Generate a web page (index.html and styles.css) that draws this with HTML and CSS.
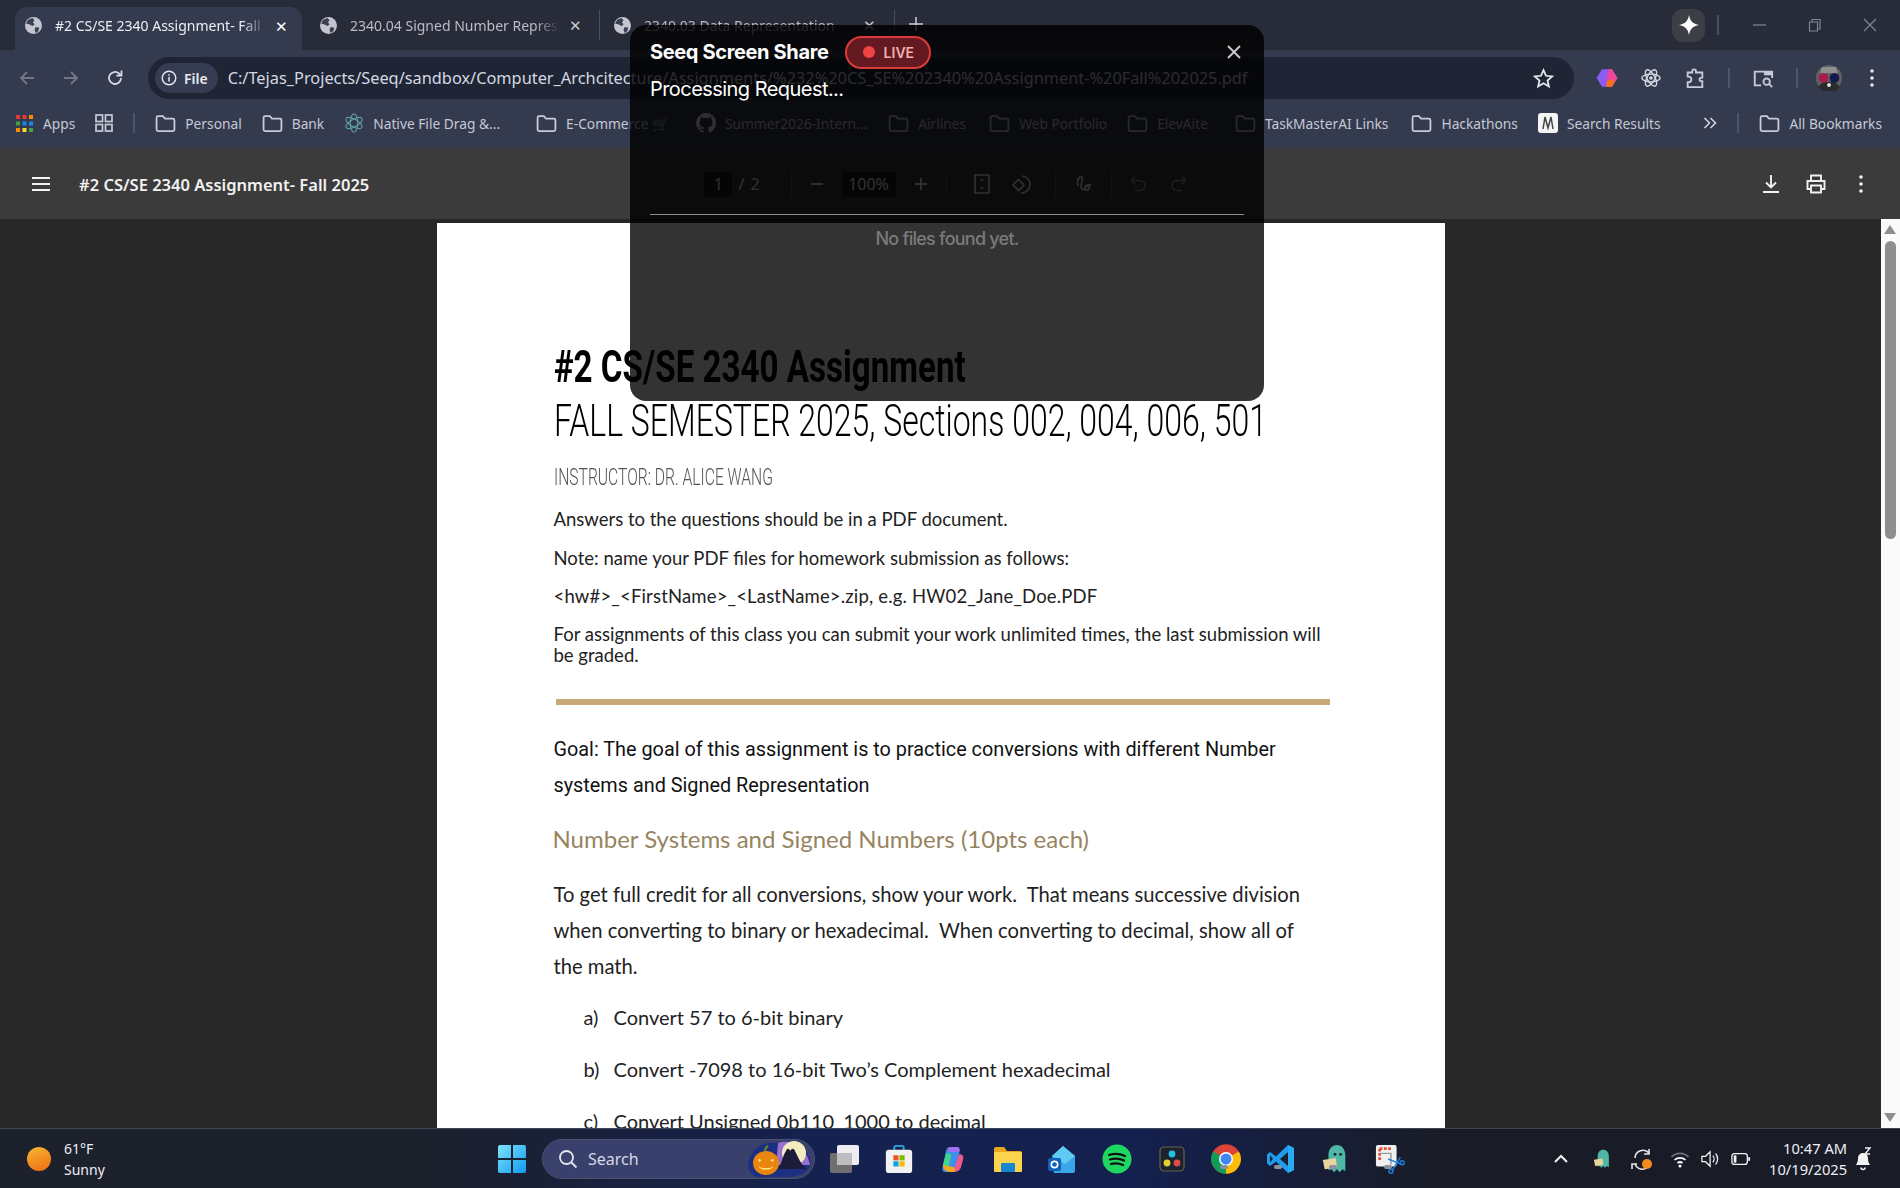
FILE: index.html
```html
<!DOCTYPE html>
<html lang="en">
<head>
<meta charset="utf-8">
<title>#2 CS/SE 2340 Assignment- Fall 2025</title>
<link rel="stylesheet" href="styles.css">
</head>
<body>
<svg class="defs" width="0" height="0">
  <symbol id="globe" viewBox="0 0 16 16"><circle cx="8" cy="8" r="8" fill="#c3c6d0"/><path d="M3 2.500 7 1l2 2-1.500 2L9 7l-2 1.500L4.500 7 1 6zM10 9.500l3.500.5-1 3.500L10 15l-1-3z" fill="#3a3f52"/></symbol>
  <symbol id="folder" viewBox="0 0 20 18"><path d="M1.500 3.500a1.500 1.500 0 0 1 1.500-1.500h4.500l2 2.300h7.500a1.500 1.500 0 0 1 1.500 1.500v9a1.500 1.500 0 0 1-1.500 1.500H3a1.500 1.500 0 0 1-1.500-1.500z" fill="none" stroke="currentColor" stroke-width="1.700"/></symbol>
</svg>
<div class="screen">
  <header class="tabstrip">
    <div class="tab tab-active">
      <svg class="fav"><use href="#globe"/></svg>
      <span class="tab-title tab-title-bright">#2 CS/SE 2340 Assignment- Fall 2025</span>
      <span class="tab-x tab-x-bright">✕</span>
    </div>
    <div class="tab tab-second">
      <svg class="fav"><use href="#globe"/></svg>
      <span class="tab-title">2340.04 Signed Number Representation</span>
      <span class="tab-x">✕</span>
    </div>
    <div class="tab tab-third">
      <svg class="fav"><use href="#globe"/></svg>
      <span class="tab-title">2340.03 Data Representation</span>
      <span class="tab-x">✕</span>
    </div>
    <svg class="tab-plus" viewBox="0 0 14 14"><path d="M7 0v14M0 7h14" stroke="#c9ccd8" stroke-width="1.500"/></svg>
    <div class="win-controls">
      <span class="gem"><svg width="22" height="22" viewBox="0 0 22 22"><path d="M11 1c1 6 4 9 10 10-6 1-9 4-10 10-1-6-4-9-10-10 6-1 9-4 10-10z" fill="#fff"/></svg></span>
      <i class="vsep"></i>
      <svg class="win-btn win-btn-first" viewBox="0 0 14 14"><path d="M0 7h13" stroke="#80869a" stroke-width="1.200"/></svg>
      <svg class="win-btn" viewBox="0 0 14 14"><path d="M1.500 4h8v9h-8zM4 4V1.500h8V11H9.500" fill="none" stroke="#80869a" stroke-width="1.200"/></svg>
      <svg class="win-btn" viewBox="0 0 14 14"><path d="M1 1l12 12M13 1 1 13" stroke="#80869a" stroke-width="1.200"/></svg>
    </div>
  </header>

  <nav class="toolbar">
    <svg class="nav-ico nav-dim" viewBox="0 0 20 20"><path d="M17 10H4M10 4l-6 6 6 6" fill="none" stroke="currentColor" stroke-width="1.800"/></svg>
    <svg class="nav-ico nav-dim" viewBox="0 0 20 20"><path d="M3 10h13M10 4l6 6-6 6" fill="none" stroke="currentColor" stroke-width="1.800"/></svg>
    <svg class="nav-ico" viewBox="0 0 20 20"><path d="M16 10a6 6 0 1 1-2-4.500L16 7.500M16.500 2.500v5.200h-5.200" fill="none" stroke="currentColor" stroke-width="1.800"/></svg>
    <div class="omnibox">
      <span class="chip"><svg width="16" height="16" viewBox="0 0 16 16"><circle cx="8" cy="8" r="6.800" fill="none" stroke="currentColor" stroke-width="1.400"/><path d="M8 7v4.500M8 4.200v1.500" stroke="currentColor" stroke-width="1.500"/></svg>File</span>
      <span class="url">C:/Tejas_Projects/Seeq/sandbox/Computer_Archcitecture/Assignments/%232%20CS_SE%202340%20Assignment-%20Fall%202025.pdf</span>
      <svg class="star" viewBox="0 0 20 20"><path d="m10 2 2.400 5.400 5.800.6-4.400 3.900 1.300 5.700-5.100-3-5.100 3 1.300-5.700L1.800 8l5.800-.6z" fill="none" stroke="#e8eaf0" stroke-width="1.700"/></svg>
    </div>
    <div class="ext-row">
      <svg class="ext" viewBox="0 0 20 20"><path d="M5.500 2h9l5 8-5 8h-9l-5-8z" fill="#8b5cf6"/><path d="M11 2h3.500l5 8-5 8H9z" fill="#ec4899"/><path d="M9 18l1.500-6h7l-3 6z" fill="#f97316"/></svg>
      <svg class="ext" viewBox="0 0 24 24"><g fill="none" stroke="#d5d8e2" stroke-width="1.500"><ellipse cx="12" cy="12" rx="10" ry="4.200"/><ellipse cx="12" cy="12" rx="10" ry="4.200" transform="rotate(60 12 12)"/><ellipse cx="12" cy="12" rx="10" ry="4.200" transform="rotate(120 12 12)"/></g><circle cx="12" cy="12" r="2" fill="#d5d8e2"/></svg>
      <svg class="ext" viewBox="0 0 24 24"><path d="M4 6h5V4.500a2 2 0 0 1 4 0V6h7v5.500h-1a2 2 0 0 0 0 4h1V22H4v-5.500h1a3 3 0 0 0 0-6H4z" fill="none" stroke="#c9ccd8" stroke-width="2"/></svg>
      <i class="vsep-sm"></i>
      <svg class="ext" viewBox="0 0 24 24"><path d="M10 20H3V5h19v7" fill="none" stroke="#c9ccd8" stroke-width="2"/><path d="M13 5h9v4h-9z" fill="#c9ccd8"/><circle cx="16" cy="16" r="3.500" fill="none" stroke="#c9ccd8" stroke-width="2"/><path d="m18.500 18.500 3.500 3.500" stroke="#c9ccd8" stroke-width="2"/></svg>
      <i class="vsep-sm"></i>
      <svg class="avatar" viewBox="0 0 26 26"><circle cx="13" cy="13" r="13" fill="#5e6062"/><path d="M2 22 7 17h12l5 5-5 4H7z" fill="#2b2b2b"/><path d="M6 2h14l2 6H4z" fill="#8f8f8f"/><circle cx="7.500" cy="13" r="4.800" fill="#a81a50"/><circle cx="18.500" cy="13" r="4.800" fill="#141a50"/><circle cx="13" cy="20" r="2" fill="#ddd"/></svg>
      <svg class="dots" viewBox="0 0 4 18"><circle cx="2" cy="2" r="1.800"/><circle cx="2" cy="9" r="1.800"/><circle cx="2" cy="16" r="1.800"/></svg>
    </div>
  </nav>

  <nav class="bookmarks">
    <div class="bm bm-apps">
      <svg class="apps-ico" viewBox="0 0 17 17">
        <rect width="4" height="4" fill="#e53935"/><rect x="6.500" width="4" height="4" fill="#e53935"/><rect x="13" width="4" height="4" fill="#fb8c00"/>
        <rect y="6.500" width="4" height="4" fill="#43a047"/><rect x="6.500" y="6.500" width="4" height="4" fill="#1e88e5"/><rect x="13" y="6.500" width="4" height="4" fill="#1e88e5"/>
        <rect y="13" width="4" height="4" fill="#fb8c00"/><rect x="6.500" y="13" width="4" height="4" fill="#fdd835"/><rect x="13" y="13" width="4" height="4" fill="#43a047"/>
      </svg>
      <span>Apps</span>
    </div>
    <svg class="tabs-ico" viewBox="0 0 18 18"><g fill="none" stroke="#c9ccd8" stroke-width="1.700"><rect x="1" y="1" width="6.500" height="6.500"/><rect x="10.500" y="1" width="6.500" height="6.500"/><rect x="1" y="10.500" width="6.500" height="6.500"/><rect x="10.500" y="10.500" width="6.500" height="6.500"/></g></svg>
    <i class="vsep-bm"></i>
    <div class="bm"><svg class="folder"><use href="#folder"/></svg><span>Personal</span></div>
    <div class="bm"><svg class="folder"><use href="#folder"/></svg><span>Bank</span></div>
    <div class="bm"><svg class="bm-site" viewBox="0 0 24 24"><g fill="none" stroke="#5f9ea0" stroke-width="1.300"><ellipse cx="12" cy="12" rx="11" ry="4.500" transform="rotate(30 12 12)"/><ellipse cx="12" cy="12" rx="11" ry="4.500" transform="rotate(90 12 12)"/><ellipse cx="12" cy="12" rx="11" ry="4.500" transform="rotate(150 12 12)"/></g></svg><span>Native File Drag &amp;...</span></div>
    <div class="bm bm-gap-16"><svg class="folder"><use href="#folder"/></svg><span>E-Commerce 🛒</span></div>
    <div class="bm bm-gap-7"><svg class="bm-site" viewBox="0 0 16 16"><path fill="#e8eaf0" d="M8 0a8 8 0 0 0-2.500 15.600c.4.100.5-.2.500-.4v-1.400c-2.200.5-2.700-1-2.700-1-.4-.9-.9-1.200-.9-1.200-.7-.5.100-.5.100-.5.800.1 1.200.8 1.200.8.700 1.200 1.900.9 2.300.7.100-.5.300-.9.500-1.100-1.800-.2-3.600-.9-3.600-4 0-.9.300-1.600.8-2.100-.1-.2-.4-1 .1-2.100 0 0 .7-.2 2.200.8a7.600 7.600 0 0 1 4 0c1.500-1 2.200-.8 2.200-.8.400 1.100.2 1.900.1 2.100.5.600.8 1.300.8 2.100 0 3.100-1.900 3.800-3.600 4 .3.200.5.700.5 1.500v2.200c0 .2.100.5.600.4A8 8 0 0 0 8 0z"/></svg><span>Summer2026-Intern...</span></div>
    <div class="bm bm-gap-1"><svg class="folder"><use href="#folder"/></svg><span>Airlines</span></div>
    <div class="bm bm-gap-3"><svg class="folder"><use href="#folder"/></svg><span>Web Portfolio</span></div>
    <div class="bm"><svg class="folder"><use href="#folder"/></svg><span>ElevAite</span></div>
    <div class="bm bm-gap-7"><svg class="folder"><use href="#folder"/></svg><span>TaskMasterAI Links</span></div>
    <div class="bm bm-gap-3"><svg class="folder"><use href="#folder"/></svg><span>Hackathons</span></div>
    <div class="bm"><svg class="bm-search" viewBox="0 0 20 20"><rect width="20" height="20" rx="3" fill="#f4f4f4"/><path d="M5 16 7 4l3 11 3-11 2 12" fill="none" stroke="#444" stroke-width="1.500"/></svg><span>Search Results</span></div>
    <svg class="more" viewBox="0 0 14 12"><path d="m1.500 1 5 5-5 5M7.500 1l5 5-5 5" fill="none" stroke="#d5d8e2" stroke-width="1.500"/></svg>
    <i class="vsep-bm"></i>
    <div class="bm"><svg class="folder"><use href="#folder"/></svg><span>All Bookmarks</span></div>
  </nav>

  <section class="pdf-bar">
    <div class="pdf-left">
      <svg class="pdf-ico" viewBox="0 0 20 20"><path d="M1 4h18M1 10h18M1 16h18" stroke="#f1f1f1" stroke-width="2"/></svg>
      <span class="pdf-title">#2 CS/SE 2340 Assignment- Fall 2025</span>
    </div>
    <div class="pdf-center">
      <span class="num-box num-page">1</span><span class="pg-of">/</span><span class="pg-total">2</span>
      <i class="pdf-sep"></i>
      <svg class="tool" viewBox="0 0 16 16"><path d="M2 8h12" stroke="#f1f1f1" stroke-width="1.800"/></svg>
      <span class="num-box num-zoom">100%</span>
      <svg class="tool" viewBox="0 0 16 16"><path d="M2 8h12M8 2v12" stroke="#f1f1f1" stroke-width="1.800"/></svg>
      <i class="pdf-sep"></i>
      <svg class="tool-lg tool-fit" viewBox="0 0 22 22"><path d="M4 2h14v18H4z" fill="none" stroke="#f1f1f1" stroke-width="1.600"/><path d="m9 7.500 2-2 2 2zM9 14.500l2 2 2-2z" fill="#f1f1f1"/></svg>
      <svg class="tool-lg tool-rotate" viewBox="0 0 22 22"><path d="M2 12l5.500-5.500L13 12l-5.500 5.500zM11 3a8.500 8.500 0 1 1-1 17" fill="none" stroke="#f1f1f1" stroke-width="1.600"/></svg>
      <i class="pdf-sep"></i>
      <svg class="tool-lg tool-sign" viewBox="0 0 22 22"><path d="M5 13C3 7 7 2 9 4s-3 9 0 12 5-6 7-3-3 6-4 3 3-5 6-4" fill="none" stroke="#f1f1f1" stroke-width="1.600"/></svg>
      <i class="pdf-sep"></i>
      <svg class="tool-faint" viewBox="0 0 20 20"><path d="M6 3 2.500 6.500 6 10M3 6.500h8a5 5 0 0 1 0 10H6" fill="none" stroke="#f1f1f1" stroke-width="1.600"/></svg>
      <svg class="tool-faint" viewBox="0 0 20 20"><path d="M14 3l3.500 3.500L14 10M17 6.500H9a5 5 0 0 0 0 10h5" fill="none" stroke="#f1f1f1" stroke-width="1.600"/></svg>
    </div>
    <div class="pdf-right">
      <svg class="pdf-ico" viewBox="0 0 20 20"><path d="M10 1v12M5 8.500l5 5 5-5M2 18h16" fill="none" stroke="#f1f1f1" stroke-width="1.900"/></svg>
      <svg class="pdf-ico" viewBox="0 0 20 20"><path d="M5 6V1.500h10V6M5 15H1.500V7h17v8H15M5 11.500h10v7H5z" fill="none" stroke="#f1f1f1" stroke-width="1.900"/></svg>
      <svg class="dots dots-pdf" viewBox="0 0 4 18"><circle cx="2" cy="2" r="1.800"/><circle cx="2" cy="9" r="1.800"/><circle cx="2" cy="16" r="1.800"/></svg>
    </div>
  </section>

  <main class="viewer">
    <div class="page-area">
      <article class="page">
        <h1 class="doc-title">#2 CS/SE 2340 Assignment</h1>
        <h2 class="doc-sub">FALL SEMESTER 2025, Sections 002, 004, 006, 501</h2>
        <p class="doc-inst">INSTRUCTOR: DR. ALICE WANG</p>
        <p class="doc-p doc-p-first">Answers to the questions should be in a PDF document.</p>
        <p class="doc-p">Note: name your PDF files for homework submission as follows:</p>
        <p class="doc-p doc-p-wide">&lt;hw#&gt;_&lt;FirstName&gt;_&lt;LastName&gt;.zip, e.g. HW02_Jane_Doe.PDF</p>
        <p class="doc-p doc-p-tight">For assignments of this class you can submit your work unlimited times, the last submission will be graded.</p>
        <hr class="doc-rule">
        <p class="doc-goal">Goal: The goal of this assignment is to practice conversions with different Number systems and Signed Representation</p>
        <h3 class="doc-h3">Number Systems and Signed Numbers (10pts each)</h3>
        <p class="doc-body">To get full credit for all conversions, show your work.&nbsp; That means successive division when converting to binary or hexadecimal.&nbsp; When converting to decimal, show all of the math.</p>
        <ol class="doc-list">
          <li><span>a)</span>Convert 57 to 6-bit binary</li>
          <li><span>b)</span>Convert -7098 to 16-bit Two’s Complement hexadecimal</li>
          <li><span>c)</span>Convert Unsigned 0b110_1000 to decimal</li>
        </ol>
      </article>
    </div>
    <aside class="scrollbar">
      <i class="arrow-up"></i>
      <i class="thumb"></i>
      <i class="arrow-down"></i>
    </aside>
  </main>

  <footer class="taskbar">
    <div class="weather">
      <i class="sun"></i>
      <div class="weather-text"><span>61°F</span><span>Sunny</span></div>
    </div>
    <div class="task-center">
      <svg class="win-logo" viewBox="0 0 28 28"><defs><linearGradient id="wl" x1="0" y1="0" x2="1" y2="1"><stop offset="0" stop-color="#7fe3fb"/><stop offset="1" stop-color="#0f9af0"/></linearGradient></defs><path d="M0 2a2 2 0 0 1 2-2h11v13H0zM15 0h11a2 2 0 0 1 2 2v11H15zM0 15h13v13H2a2 2 0 0 1-2-2zM15 15h13v11a2 2 0 0 1-2 2H15z" fill="url(#wl)"/></svg>
      <div class="search">
        <svg width="20" height="20" viewBox="0 0 20 20"><circle cx="8.500" cy="8.500" r="6.500" fill="none" stroke="#e4e6ee" stroke-width="1.800"/><path d="m13.500 13.500 5 5" stroke="#e4e6ee" stroke-width="1.800"/></svg>
        <span>Search</span>
        <svg class="pumpkin" viewBox="0 0 62 40"><path d="M0 26C2 10 14 2 30 4l14-2c12 2 18 14 18 22 0 8-8 14-26 14H12C4 38 0 32 0 26z" fill="#1d2f80"/><path d="M30 4c12-4 28 2 32 22H28z" fill="#9a6fd0"/><circle cx="46" cy="14" r="12" fill="#f4ecc0"/><path d="M30 30c4-6 5-14 8-18 1-3 3-3 4 0 2-3 4-3 5 0 3 6 6 14 12 18z" fill="#1c1c38"/><ellipse cx="18" cy="24" rx="13" ry="12" fill="#e8860f"/><path d="M17 12c0-3 1-4 3-5" stroke="#5c8a2a" stroke-width="2" fill="none"/><path d="M10 27c4 3 12 3 16 0-3 5-13 5-16 0zM10 20l4 1-3 2zM26 20l-4 1 3 2z" fill="#ffe680"/></svg>
      </div>
      <div class="apps">
        <svg class="app" viewBox="0 0 30 30"><rect x="1" y="9" width="22" height="20" rx="2" fill="#6f6f6f"/><rect x="8" y="1" width="22" height="20" rx="2" fill="#eeeef2"/><rect x="8" y="9" width="15" height="12" fill="#bdbdc2"/></svg>
        <svg class="app" viewBox="0 0 30 32"><path d="M10 7V4a2 2 0 0 1 2-2h6a2 2 0 0 1 2 2v3" fill="none" stroke="#27a9e0" stroke-width="2"/><rect x="1" y="6" width="28" height="25" rx="3" fill="#f2f2f4"/><rect x="9" y="12" width="5.500" height="5.500" fill="#f25022"/><rect x="15.500" y="12" width="5.500" height="5.500" fill="#7fba00"/><rect x="9" y="18.500" width="5.500" height="5.500" fill="#00a4ef"/><rect x="15.500" y="18.500" width="5.500" height="5.500" fill="#ffb900"/></svg>
        <svg class="app" viewBox="0 0 30 30"><path d="M12 3h7c3 0 3 4 2 7l-4 15c-1 3-3 3-5 3H7c-3 0-3-4-2-7l3-14c1-3 2-4 4-4z" fill="#3f8ef0"/><path d="M5 21l3-11c2-2 5-1 5 2l-3 14c-3 1-5-2-5-5z" fill="#3fd68a"/><path d="M21 10c4 0 5 3 4 6l-2 7c-1 4-4 5-8 5h-3c3-1 4-3 5-6z" fill="#ed5a8a"/><path d="M12 3h7c3 0 3 3 2 5H11c-1-2-1-5 1-5z" fill="#a46ef0"/><path d="M5 21c0 4 3 7 7 7h4c2 0 1-5-1-5z" fill="#f5a623"/></svg>
        <svg class="app" viewBox="0 0 30 30"><path d="M1 5a2 2 0 0 1 2-2h8l3 4h13a2 2 0 0 1 2 2v18H1z" fill="#e9a91a"/><rect x="1" y="8" width="28" height="20" rx="1" fill="#fcd34d"/><rect x="8" y="19" width="14" height="9" rx="1" fill="#1487d0"/></svg>
        <svg class="app" viewBox="0 0 30 30"><path d="M5 12 16 2l12 10v15a2 2 0 0 1-2 2H7z" fill="#3aa6e8"/><path d="M5 12 16 2l12 10-10 8z" fill="#5ecbf2"/><rect x="1" y="14" width="13" height="13" rx="2" fill="#0f5fb8"/><circle cx="7.500" cy="20.500" r="3.200" fill="none" stroke="#fff" stroke-width="1.700"/></svg>
        <svg class="app" viewBox="0 0 30 30"><circle cx="15" cy="15" r="14.500" fill="#1ed760"/><path d="M7 11c6-2 11-1.500 16 1M8 15.500c5-1.500 10-1 14 1M9 20c4-1 8-.7 12 1" fill="none" stroke="#111" stroke-width="2.200" stroke-linecap="round"/></svg>
        <svg class="app" viewBox="0 0 30 30"><rect x="3" y="3" width="24" height="24" rx="4" fill="#1c2230" stroke="#66654a" stroke-width="1.200"/><circle cx="15" cy="10" r="3.400" fill="#27c1e0"/><circle cx="10" cy="19" r="3.400" fill="#e2d130"/><circle cx="20" cy="19" r="3.400" fill="#e04a4a"/></svg>
        <svg class="app" viewBox="0 0 30 30"><circle cx="15" cy="15" r="14.800" fill="#db4437"/><path d="M15 15 27.800 7.500A14.800 14.800 0 0 1 15 29.800z" fill="#fbbc05"/><path d="M15 15 15 29.800A14.800 14.800 0 0 1 2.200 7.500z" fill="#0f9d58"/><circle cx="15" cy="15" r="7" fill="#fff"/><circle cx="15" cy="15" r="5.500" fill="#4285f4"/></svg>
        <svg class="app" viewBox="0 0 30 30"><path d="M22 1 28 4v22l-6 3-12-11.500L4 22l-3-2.500v-9L4 8l6 4.500z" fill="#1f9cf0"/><path d="M22 8v14l-8-7z" fill="#16202e"/><path d="M4 11l3 3.900-3 3.500z" fill="#16202e"/><path d="M22 1l6 3v22l-6 3z" fill="#2ba9f5"/></svg>
        <svg class="app" viewBox="0 0 30 32"><path d="M8 28V12C8 5 12 1 17 1s9 4 9 11v17l-3-2-3 3-3-3-3 3-3-3z" fill="#4fb7a6"/><circle cx="15" cy="11" r="1.500" fill="#123"/><circle cx="21" cy="11" r="1.500" fill="#123"/><path d="M2 17l14-2 1 10-13 2z" fill="#e9d59b"/></svg>
        <svg class="app" viewBox="0 0 32 32"><rect x="1" y="1" width="22" height="23" rx="2" fill="#f0f0f2"/><path d="M5 5h12M5 5v12" stroke="#e0503a" stroke-width="3" stroke-dasharray="3 1.500"/><path d="M5 10h12v12" fill="none" stroke="#9a9a9a" stroke-width="1.500"/><path d="M18 29 27 14M29 22l-15-6" stroke="#1b7fe0" stroke-width="1.500"/><circle cx="17" cy="29" r="2.200" fill="none" stroke="#1b7fe0" stroke-width="1.500"/><circle cx="29" cy="20" r="2.200" fill="none" stroke="#1b7fe0" stroke-width="1.500"/></svg>
        <i class="run-dot"></i><i class="run-dot"></i><i class="run-dot"></i><i class="run-dot"></i>
      </div>
    </div>
    <div class="tray">
      <svg class="tray-ico tray-caret" viewBox="0 0 16 16"><path d="m2 11 6-6 6 6" fill="none" stroke="#f2f2f2" stroke-width="2"/></svg>
      <svg class="tray-ico tray-ghost" viewBox="0 0 30 32"><path d="M8 28V12C8 5 12 1 17 1s9 4 9 11v17l-3-2-3 3-3-3-3 3-3-3z" fill="#4fb7a6"/><path d="M2 17l14-2 1 10-13 2z" fill="#e9d59b"/></svg>
      <svg class="tray-ico tray-sync" viewBox="0 0 24 24"><path d="M5 11a8 8 0 0 1 14-5M19 2v5h-5M18 20a8 8 0 0 1-13-3M2 22v-5h5" fill="none" stroke="#e8e8e8" stroke-width="1.600"/><circle cx="17" cy="17" r="5" fill="#f28c1c"/></svg>
      <svg class="tray-ico tray-wifi" viewBox="0 0 20 20"><path d="M1.500 8a12 12 0 0 1 17 0" fill="none" stroke="#70747e" stroke-width="1.700"/><path d="M4.500 11a8 8 0 0 1 11 0M7.500 14a4 4 0 0 1 5 0" fill="none" stroke="#fff" stroke-width="1.700"/><circle cx="10" cy="17" r="1.500" fill="#fff"/></svg>
      <svg class="tray-ico" viewBox="0 0 22 20"><path d="M1 7h4l5-5v16l-5-5H1z" fill="none" stroke="#f2f2f2" stroke-width="1.400"/><path d="M13 6.500a5 5 0 0 1 0 7M16 4a9 9 0 0 1 0 12" fill="none" stroke="#f2f2f2" stroke-width="1.400"/></svg>
      <svg class="tray-ico" viewBox="0 0 22 16"><rect x="1" y="2" width="17" height="12" rx="3" fill="none" stroke="#f2f2f2" stroke-width="1.400"/><rect x="3" y="4" width="3" height="8" rx="1" fill="#f2f2f2"/><path d="M20 6v4" stroke="#f2f2f2" stroke-width="2"/></svg>
      <div class="clock"><span>10:47 AM</span><span>10/19/2025</span></div>
      <svg class="bell" viewBox="0 0 20 24"><path d="M3 18c1-2 2-3 2-7a5 5 0 0 1 10 0c0 4 1 5 2 7z" fill="#f2f2f2"/><path d="M8 20.500a2 2 0 0 0 4 0" fill="none" stroke="#f2f2f2" stroke-width="1.600"/><path d="M12 1h5l-5 6h5" fill="none" stroke="#f2f2f2" stroke-width="1.400"/></svg>
    </div>
  </footer>

  <section class="share">
    <div class="share-head">
      <strong class="share-name">Seeq Screen Share</strong>
      <span class="live"><i class="live-dot"></i>LIVE</span>
      <svg class="share-x" viewBox="0 0 14 14"><path d="M1 1l12 12M13 1 1 13" stroke="#c9c9c9" stroke-width="1.900"/></svg>
    </div>
    <p class="share-status">Processing Request...</p>
    <div class="share-list">
      <p class="share-empty">No files found yet.</p>
    </div>
  </section>
</div>
</body>
</html>
```

FILE: styles.css
```css
* { box-sizing: border-box; }
html, body { margin: 0; padding: 0; background: #282828; }
.defs { position: absolute; }
.screen {
  position: relative;
  display: flex;
  flex-direction: column;
  width: 1900px;
  height: 1188px;
  overflow: hidden;
  font-family: "Noto Sans", "Open Sans", sans-serif;
  color: #d5d8e2;
}

/* tab strip */
.tabstrip {
  display: flex;
  align-items: flex-end;
  flex: 0 0 50px;
  padding-left: 15px;
  background: #282b38;
}
.tab {
  display: flex;
  align-items: center;
  height: 43px;
  font-size: 14px;
  position: relative;
}
.tab-active {
  width: 287px;
  padding: 0 13px 6px 10px;
  border-radius: 12px 12px 0 0;
  background: #353b4e;
  color: #fff;
}
.tab-second {
  width: 298px;
  padding: 0 16px 0 18px;
  border-right: 1px solid #4a4f60;
  height: 30px;
  margin-bottom: 10px;
  color: #b9bcc8;
}
.tab-third {
  width: 295px;
  padding: 0 17px 0 14px;
  border-right: 1px solid #4a4f60;
  height: 30px;
  margin-bottom: 10px;
  color: #b9bcc8;
}
.fav { flex: none; width: 17px; height: 17px; margin-right: 13px; }
.tab-title {
  flex: 1;
  overflow: hidden;
  white-space: nowrap;
  -webkit-mask-image: linear-gradient(to right, #000 88%, transparent);
  mask-image: linear-gradient(to right, #000 88%, transparent);
}
.tab-title-bright { color: #eceef3; }
.tab-x { flex: none; margin-left: 8px; font-size: 15px; width: 15px; text-align: center; color: #c6c9d4; }
.tab-x-bright { color: #fff; }
.tab-plus { width: 14px; height: 14px; flex: none; margin: 0 0 19px 14px; }
.win-controls {
  display: flex;
  align-items: center;
  margin-left: auto;
  padding-right: 23px;
  height: 50px;
}
.gem {
  display: flex;
  align-items: center;
  justify-content: center;
  width: 33px;
  height: 33px;
  border-radius: 11px;
  background: #3d3f46;
}
.vsep { width: 2px; height: 20px; margin: 0 0 0 12px; background: #4a4e5c; }
.win-btn { width: 14px; height: 14px; margin-left: 41px; }
.win-btn-first { margin-left: 34px; }

/* toolbar */
.toolbar {
  display: flex;
  align-items: center;
  flex: 0 0 50px;
  padding: 7px 0 1px 17px;
  background: #353b4e;
}
.nav-ico { flex: none; width: 20px; height: 20px; margin-right: 24px; color: #d5d8e2; }
.nav-dim { color: #71768a; }
.omnibox {
  display: flex;
  align-items: center;
  flex: 0 0 1426px;
  height: 42px;
  margin-left: -1px;
  padding: 0 20px 0 7px;
  border-radius: 21px;
  background: #1f2535;
}
.chip {
  display: flex;
  align-items: center;
  gap: 7px;
  height: 30px;
  padding: 0 10px 0 6px;
  border-radius: 15px;
  background: #363d52;
  color: #e8eaf0;
  font-size: 14px;
  font-weight: 600;
}
.url { flex: 1; margin-left: 10px; color: #d5d8e2; font-size: 16.330px; white-space: nowrap; overflow: hidden; }
.star { flex: none; width: 21px; height: 21px; }
.ext-row { display: flex; align-items: center; }
.ext { width: 22px; height: 22px; flex: none; margin-left: 22px; }
.vsep-sm { width: 2px; height: 20px; margin-left: 22px; background: #4f5568; }
.avatar { width: 26px; height: 26px; margin-left: 18px; flex: none; }
.dots { width: 4px; height: 18px; margin-left: 28px; fill: #e6e8ee; flex: none; }

/* bookmarks */
.bookmarks {
  display: flex;
  align-items: center;
  gap: 20px;
  flex: 0 0 48px;
  padding: 0 18px 2px 16px;
  background: #353b4e;
  font-size: 13.750px;
  color: #c5c9d6;
  white-space: nowrap;
}
.bm { display: flex; align-items: center; gap: 9px; flex: none; }
.bm-apps { gap: 10px; }
.bm-gap-1 { margin-left: 1px; }
.bm-gap-3 { margin-left: 3px; }
.bm-gap-7 { margin-left: 7px; }
.bm-gap-16 { margin-left: 16px; }
.apps-ico { width: 17px; height: 17px; flex: none; }
.tabs-ico { width: 18px; height: 18px; flex: none; }
.vsep-bm { width: 2px; height: 20px; background: #4f5568; flex: none; }
.folder { width: 21px; height: 19px; flex: none; color: #c9ccd8; }
.bm-site { width: 20px; height: 20px; flex: none; }
.bm-search { width: 20px; height: 20px; flex: none; }
.more { width: 14px; height: 12px; flex: none; margin-left: auto; }

/* pdf toolbar */
.pdf-bar {
  display: grid;
  grid-template-columns: 1fr auto 1fr;
  align-items: center;
  flex: 0 0 71px;
  padding: 1px 29px 0 31px;
  background: #3b3b3b;
  color: #f1f1f1;
}
.pdf-left { display: flex; align-items: center; gap: 28px; }
.pdf-title { font-size: 16.500px; font-weight: 600; }
.pdf-ico { width: 20px; height: 20px; flex: none; }
.pdf-center { display: flex; align-items: center; padding-right: 10px; font-size: 16px; }
.num-box {
  display: flex;
  align-items: center;
  justify-content: center;
  height: 25px;
  background: #1b1b1b;
}
.num-page { width: 28px; }
.num-zoom { width: 54px; margin: 0 17px; }
.pg-of { margin-left: 6px; }
.pg-total { margin: 0 14px 0 6px; }
.pdf-sep { width: 1px; height: 25px; margin: 0 17px; background: #5a5a5a; }
.tool { width: 16px; height: 16px; flex: none; }
.tool-lg { width: 22px; height: 22px; flex: none; }
.tool-fit { margin: 0 18px 0 7px; }
.tool-rotate { margin-right: 5px; }
.tool-sign { margin-right: -1px; }
.tool-faint { width: 20px; height: 20px; flex: none; margin-right: 19px; opacity: .45; }
.tool-faint:last-child { margin-right: 0; }
.pdf-right { display: flex; align-items: center; justify-content: flex-end; gap: 25px; }
.dots-pdf { margin: 0 8px 0 8px; fill: #f1f1f1; }

/* viewer */
.viewer {
  display: flex;
  flex: 0 0 909px;
  min-height: 0;
  background: #282828;
}
.page-area {
  display: flex;
  justify-content: center;
  flex: 1;
  min-width: 0;
  padding-top: 4px;
  overflow: hidden;
}
.page {
  flex: 0 0 1008px;
  min-width: 0;
  height: 1000px;
  padding: 117px 115px 0 117px;
  background: #fff;
  color: #222;
  font-family: "Lato", "Open Sans", sans-serif;
}
.doc-title, .doc-sub, .doc-inst {
  white-space: nowrap;
  transform-origin: left center;
  font-family: "Roboto", sans-serif;
  color: #000;
}
.doc-title { margin: 0; font-size: 44px; line-height: 54px; font-weight: 700; transform: scaleX(.753); }
.doc-sub { margin: 0; font-size: 44px; line-height: 54px; font-weight: 300; transform: scaleX(.727); }
.doc-inst { margin: 16px 0 0; font-size: 23px; line-height: 28px; font-weight: 300; transform: scaleX(.68); color: #555; }
.doc-p { margin: 0 0 16.500px; font-size: 18.500px; line-height: 22px; }
.doc-p-first { margin-top: 16px; }
.doc-p-wide { letter-spacing: .17px; }
.doc-p-tight { margin-bottom: 0; line-height: 21px; }
.doc-rule {
  height: 6px;
  margin: 33px 0 0 2px;
  border: 0;
  background: #c8a978;
}
.doc-goal {
  margin: 27px 0 0;
  font: 400 19.830px/36px "Roboto", sans-serif;
  color: #111;
}
.doc-h3 {
  margin: 17px 0 0 -1px;
  font-size: 24px;
  line-height: 36px;
  font-weight: 400;
  color: #97845f;
}
.doc-body { margin: 19px 10px 0 0; font-size: 20.200px; line-height: 36px; }
.doc-list { margin: 15px 0 0; padding: 0 0 0 30px; list-style: none; font-size: 20px; line-height: 36px; }
.doc-list li { margin-bottom: 16px; }
.doc-list span { display: inline-block; width: 30px; }

.scrollbar {
  position: relative;
  flex: 0 0 19px;
  background: #fafafa;
}
.arrow-up, .arrow-down {
  position: absolute;
  left: 3px;
  width: 0;
  height: 0;
  border-left: 6px solid transparent;
  border-right: 6px solid transparent;
}
.arrow-up { top: 6px; border-bottom: 9px solid #8e8e8e; }
.arrow-down { bottom: 6px; border-top: 9px solid #8e8e8e; }
.thumb {
  position: absolute;
  left: 4px;
  top: 22px;
  width: 11px;
  height: 298px;
  border-radius: 6px;
  background: #8e8e8e;
}

/* taskbar */
.taskbar {
  position: relative;
  display: flex;
  align-items: center;
  flex: 0 0 60px;
  border-top: 1px solid #3f4658;
  background: linear-gradient(to right, #1c212c 0, #1c212c 22%, #15214e 42%, #14204e 60%, #191c26 76%, #191c26 100%);
  color: #eceff5;
}
.weather { display: flex; align-items: center; gap: 13px; padding-left: 27px; flex: 0 0 498px; }
.sun { width: 24px; height: 24px; border-radius: 50%; background: linear-gradient(160deg, #f7b733, #ef6a12); }
.weather-text { display: flex; flex-direction: column; font-size: 14px; line-height: 21px; }
.task-center { display: flex; align-items: center; flex: 0 0 920px; }
.win-logo { width: 28px; height: 28px; flex: none; }
.search {
  display: flex;
  align-items: center;
  flex: 0 0 273px;
  height: 40px;
  margin-left: 16px;
  padding-left: 15px;
  border: 1px solid #4a5272;
  border-radius: 20px;
  background: #38406b;
  font-size: 16px;
  color: #d6d9e6;
}
.search span { margin-left: 10px; flex: 1; }
.pumpkin { width: 62px; height: 40px; margin-right: 4px; flex: none; }
.apps {
  position: relative;
  display: flex;
  align-items: center;
  gap: 24.600px;
  margin-left: 14px;
}
.app { width: 30px; height: 30px; flex: none; }
.run-dot { position: absolute; top: 21px; width: 8px; height: 4px; border-radius: 2px; background: #8c92a0; }
.run-dot:nth-of-type(1) { left: 391px; }
.run-dot:nth-of-type(2) { left: 445px; }
.run-dot:nth-of-type(3) { left: 500px; }
.run-dot:nth-of-type(4) { left: 555px; }
.tray { display: flex; align-items: center; flex: 1; padding-left: 135px; }
.tray-ico { width: 20px; height: 20px; flex: none; margin-right: 10px; }
.tray-caret { width: 16px; height: 16px; margin-right: 23px; }
.tray-ghost { margin-right: 12px; }
.tray-sync { width: 24px; height: 24px; margin: 0 16px 0 6px; }
.tray-wifi { margin-right: 11px; }
.clock { display: flex; flex-direction: column; align-items: flex-end; margin-left: 8px; font-size: 14.700px; line-height: 21px; flex: none; }
.bell { width: 20px; height: 24px; margin-left: 6px; flex: none; }

/* overlay */
.share {
  position: absolute;
  left: 630px;
  top: 25px;
  width: 634px;
  height: 376px;
  padding: 11px 20px 0;
  border-radius: 16px;
  background: rgba(0, 0, 0, .8);
  color: #fff;
  font-family: "Inter", sans-serif;
}
.share-head { display: flex; align-items: center; height: 32px; }
.share-name { font-size: 20px; font-weight: 700; letter-spacing: -.35px; }
.live {
  display: flex;
  align-items: center;
  gap: 9px;
  height: 33px;
  margin-left: 16px;
  padding: 0 15px 0 16px;
  border: 2px solid #dc3a3a;
  border-radius: 17px;
  background: #651920;
  color: #f3b0b0;
  font-size: 14px;
  font-weight: 600;
}
.live-dot { width: 12px; height: 12px; border-radius: 50%; background: #ef4444; }
.share-x { width: 14px; height: 14px; margin: 0 3px 0 auto; }
.share-status { margin: 8px 0 0; font-size: 20px; line-height: 26px; letter-spacing: -.55px; }
.share-list {
  margin-top: 112px;
  padding-top: 12px;
  border-top: 1px solid #8c8c8c;
}
.share-empty { margin: 0; font-size: 18px; line-height: 24px; font-weight: 500; color: #7a7a7a; text-align: center; letter-spacing: -.75px; }
```
